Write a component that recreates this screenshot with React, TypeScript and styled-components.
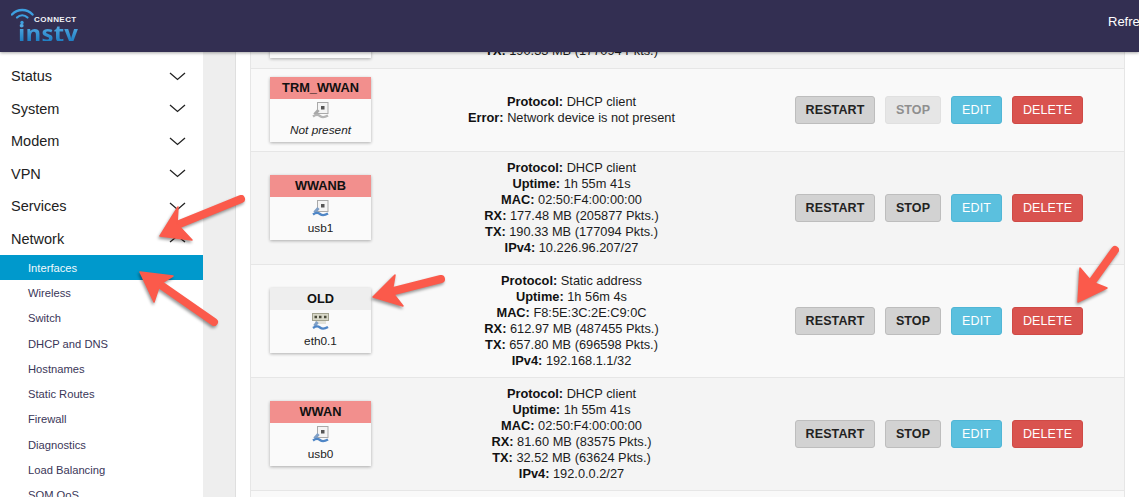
import styled, { createGlobalStyle } from "styled-components";

const GlobalStyle = createGlobalStyle`
  html, body {
    margin: 0;
    padding: 0;
    background: #fff;
  }
  * {
    box-sizing: border-box;
  }
`;

const Page = styled.div`
  position: relative;
  width: 1139px;
  height: 497px;
  overflow: hidden;
  display: flex;
  flex-direction: column;
  font-family: "Liberation Sans", Arial, sans-serif;
  color: #111;
`;

const Header = styled.header`
  position: relative;
  z-index: 2;
  flex: 0 0 52px;
  display: grid;
  grid-template-columns: 1108px 200px;
  align-items: center;
  background: #332f52;
  box-shadow: 0 1px 3px rgba(0, 0, 0, 0.35);
`;

const Logo = styled.div`
  display: flex;
  flex-direction: column;
  padding: 8px 0 0 11px;
  height: 52px;
`;

const LogoTop = styled.div`
  display: flex;
  align-items: flex-end;
  height: 16px;
`;

const LogoConnect = styled.span`
  margin: 0 0 0 -1px;
  font-size: 8px;
  line-height: 8px;
  font-weight: 700;
  letter-spacing: 0.45px;
  color: #f2f4f8;
`;

const LogoName = styled.span`
  display: block;
  width: 62px;
  height: 19px;
  margin: -2px 0 0 7px;
  overflow: hidden;
  font-family: "Open Sans", "Liberation Sans", sans-serif;
  font-size: 24px;
  line-height: 21px;
  font-weight: 700;
  letter-spacing: 0.2px;
  background: linear-gradient(#5fb4ea, #1f7fc4);
  -webkit-background-clip: text;
  background-clip: text;
  color: transparent;
`;

const RefreshLabel = styled.span`
  margin-top: -10px;
  font-size: 13px;
  color: #fff;
  white-space: nowrap;
`;

const Body = styled.div`
  flex: 1;
  display: flex;
  min-height: 0;
`;

const Sidebar = styled.nav`
  flex: 0 0 203px;
  padding-top: 8px;
  background: #fff;
`;

const MenuItem = styled.div`
  height: 32.5px;
  display: flex;
  align-items: center;
  justify-content: space-between;
  padding: 0 17px 0 11px;
  font-size: 14.5px;
  color: #222;
`;

const SubItem = styled.div<{ $active?: boolean }>`
  height: 25.3px;
  display: flex;
  align-items: center;
  padding-left: 28px;
  font-size: 11.2px;
  white-space: nowrap;
  color: ${(p) => (p.$active ? "#f2fafd" : "#3a3658")};
  background: ${(p) => (p.$active ? "#0099cc" : "transparent")};
`;

const Gutter = styled.div`
  flex: 0 0 33px;
  background: #eeeeee;
  border-right: 1px solid #dfdfdf;
`;

const Main = styled.main`
  flex: 1;
  background: #fff;
  padding: 0 14px;
  min-width: 0;
`;

const Table = styled.div`
  margin-top: -96px;
  border-left: 1px solid #e6e6e6;
  border-right: 1px solid #e6e6e6;
`;

const Row = styled.div<{ $alt?: boolean; $clipped?: boolean }>`
  min-height: ${(p) => (p.$clipped ? "113px" : "83px")};
  display: grid;
  grid-template-columns: 101px 1fr 330px;
  align-items: ${(p) => (p.$clipped ? "end" : "center")};
  padding: ${(p) => (p.$clipped ? "8px 0 9px 19px" : "8px 0 8px 19px")};
  background: ${(p) => (p.$alt ? "#f4f4f4" : "#f9f9f9")};
  border-bottom: 1px solid #e6e6e6;
`;

const Badge = styled.div`
  height: 65px;
  margin: -1px 0 1px;
  display: flex;
  flex-direction: column;
  align-items: center;
  background: #fafafa;
  box-shadow: 0 1px 3px rgba(0, 0, 0, 0.3);
`;

const BadgeTitle = styled.div<{ $down?: boolean }>`
  width: 100%;
  flex: 0 0 22px;
  display: flex;
  align-items: center;
  justify-content: center;
  font-size: 12.8px;
  font-weight: 700;
  color: #111;
  background: ${(p) => (p.$down ? "#f28f8d" : "#eeeeee")};
`;

const DeviceIcon = styled.svg`
  margin-top: 3px;
  width: 17px;
  height: 17px;
`;

const BadgeDevice = styled.div<{ $missing?: boolean }>`
  margin-top: 4px;
  font-size: 11.8px;
  line-height: 15px;
  font-style: ${(p) => (p.$missing ? "italic" : "normal")};
  color: #222;
`;

const Info = styled.div`
  padding-right: 22px;
  text-align: center;
  font-size: 12.8px;
  line-height: 16px;
  color: #1c1c1c;
  strong {
    color: #111;
  }
`;

const Actions = styled.div`
  align-self: center;
  display: flex;
  align-items: center;
  gap: 10px;
  padding-left: 1px;
`;

const ActionButton = styled.button<{ $kind: "plain" | "info" | "danger"; $off?: boolean }>`
  height: 28px;
  padding: 0;
  border-radius: 3px;
  font-family: inherit;
  font-size: 12.5px;
  font-weight: ${(p) => (p.$kind === "plain" ? 700 : 400)};
  letter-spacing: 0.1px;
  color: ${(p) => (p.$kind !== "plain" ? "#fff" : p.$off ? "#8f8f8f" : "#222")};
  background: ${(p) =>
    p.$kind === "info"
      ? "#5bc0de"
      : p.$kind === "danger"
        ? "#d9534f"
        : p.$off
          ? "#e6e6e6"
          : "#d2d2d2"};
  border: 1px solid
    ${(p) =>
      p.$kind === "info"
        ? "#50b6d6"
        : p.$kind === "danger"
          ? "#cf4a46"
          : p.$off
            ? "#e0e0e0"
            : "#bdbdbd"};
`;

const RestartButton = styled(ActionButton)`
  width: 80px;
`;
const StopButton = styled(ActionButton)`
  width: 56px;
`;
const EditButton = styled(ActionButton)`
  width: 51px;
`;
const DeleteButton = styled(ActionButton)`
  width: 71px;
`;

const ArrowLayer = styled.svg`
  position: absolute;
  inset: 0;
  z-index: 3;
  width: 1139px;
  height: 497px;
  pointer-events: none;
  filter: drop-shadow(-1px 2px 1.5px rgba(0, 0, 0, 0.4));
`;

const Chevron = ({ up }: { up?: boolean }) => (
  <svg width="17" height="9" viewBox="0 0 17 9" fill="none">
    <path
      d={up ? "M1 8 L8.5 2 L16 8" : "M1 1 L8.5 7.5 L16 1"}
      stroke="#222"
      strokeWidth="1.3"
    />
  </svg>
);

const UsbIcon = ({ muted }: { muted?: boolean }) => (
  <DeviceIcon viewBox="0 0 17 17">
    <rect x="5.5" y="0.5" width="10.5" height="11" fill="#f4f4f4" stroke="#a9a9a9" />
    <rect x="9" y="4" width="3.5" height="3.5" fill="#555" />
    <path d="M6.5 8 L2.5 12.5" stroke={muted ? "#a8a8a8" : "#7f9fc6"} strokeWidth="3" />
    <path
      d="M1 14.5 Q5 11.5 8 14 T16 13.5"
      fill="none"
      stroke={muted ? "#b5b5b5" : "#4f86c6"}
      strokeWidth="2.4"
    />
  </DeviceIcon>
);

const EthernetIcon = () => (
  <DeviceIcon viewBox="0 0 17 17">
    <rect x="0.5" y="0.5" width="16" height="7" fill="#d8d8c8" stroke="#a3a38f" />
    <path d="M2.5 4 h2.5 M7 4 h2.5 M12 4 h2.5" stroke="#4a4a3a" strokeWidth="2.4" />
    <rect x="3" y="8" width="11" height="3" fill="#e3e3da" />
    <path d="M5.5 9 L2.5 13" stroke="#7f9fc6" strokeWidth="3" />
    <path d="M1 15 Q5 12 8 14.5 T16 14" fill="none" stroke="#4f86c6" strokeWidth="2.4" />
  </DeviceIcon>
);

type Line = [string, string];

type Iface = {
  name: string;
  device: string;
  down?: boolean;
  missing?: boolean;
  eth?: boolean;
  lines: Line[];
};

const interfaces: Iface[] = [
  {
    name: "TRM_WWAN",
    device: "Not present",
    down: true,
    missing: true,
    lines: [
      ["Protocol:", "DHCP client"],
      ["Error:", "Network device is not present"],
    ],
  },
  {
    name: "WWANB",
    device: "usb1",
    down: true,
    lines: [
      ["Protocol:", "DHCP client"],
      ["Uptime:", "1h 55m 41s"],
      ["MAC:", "02:50:F4:00:00:00"],
      ["RX:", "177.48 MB (205877 Pkts.)"],
      ["TX:", "190.33 MB (177094 Pkts.)"],
      ["IPv4:", "10.226.96.207/27"],
    ],
  },
  {
    name: "OLD",
    device: "eth0.1",
    eth: true,
    lines: [
      ["Protocol:", "Static address"],
      ["Uptime:", "1h 56m 4s"],
      ["MAC:", "F8:5E:3C:2E:C9:0C"],
      ["RX:", "612.97 MB (487455 Pkts.)"],
      ["TX:", "657.80 MB (696598 Pkts.)"],
      ["IPv4:", "192.168.1.1/32"],
    ],
  },
  {
    name: "WWAN",
    device: "usb0",
    down: true,
    lines: [
      ["Protocol:", "DHCP client"],
      ["Uptime:", "1h 55m 41s"],
      ["MAC:", "02:50:F4:00:00:00"],
      ["RX:", "81.60 MB (83575 Pkts.)"],
      ["TX:", "32.52 MB (63624 Pkts.)"],
      ["IPv4:", "192.0.0.2/27"],
    ],
  },
];

const menu = ["Status", "System", "Modem", "VPN", "Services"];
const subMenu = [
  "Interfaces",
  "Wireless",
  "Switch",
  "DHCP and DNS",
  "Hostnames",
  "Static Routes",
  "Firewall",
  "Diagnostics",
  "Load Balancing",
  "SQM QoS",
];

const InfoLines = ({ lines }: { lines: Line[] }) => (
  <Info>
    {lines.map(([label, value]) => (
      <div key={label}>
        <strong>{label}</strong> {value}
      </div>
    ))}
  </Info>
);

const RowActions = ({ stopped }: { stopped?: boolean }) => (
  <Actions>
    <RestartButton $kind="plain">RESTART</RestartButton>
    <StopButton $kind="plain" $off={stopped}>
      STOP
    </StopButton>
    <EditButton $kind="info">EDIT</EditButton>
    <DeleteButton $kind="danger">DELETE</DeleteButton>
  </Actions>
);

export default function App() {
  return (
    <Page>
      <GlobalStyle />
      <Header>
        <Logo>
          <LogoTop>
            <svg width="24" height="16" viewBox="0 0 24 16" fill="none">
              <path d="M1 6.5 C6.5 0.5 16 0.5 21.5 6.5" stroke="#3d9fe0" strokeWidth="2.4" strokeLinecap="round" />
              <path d="M6 9.5 C9 6.5 13.5 6.5 16.5 9.5" stroke="#3d9fe0" strokeWidth="2.2" strokeLinecap="round" />
              <circle cx="11" cy="14.5" r="1.7" fill="#3d9fe0" />
            </svg>
            <LogoConnect>CONNECT</LogoConnect>
          </LogoTop>
          <LogoName>insty</LogoName>
        </Logo>
        <RefreshLabel>Refreshing...</RefreshLabel>
      </Header>
      <Body>
        <Sidebar>
          {menu.map((item) => (
            <MenuItem key={item}>
              {item}
              <Chevron />
            </MenuItem>
          ))}
          <MenuItem>
            Network
            <Chevron up />
          </MenuItem>
          {subMenu.map((item, i) => (
            <SubItem key={item} $active={i === 0}>
              {item}
            </SubItem>
          ))}
        </Sidebar>
        <Gutter />
        <Main>
          <Table>
            <Row $alt $clipped>
              <Badge>
                <BadgeTitle $down>WWANC</BadgeTitle>
                <UsbIcon />
                <BadgeDevice>usb2</BadgeDevice>
              </Badge>
              <InfoLines
                lines={[
                  ["Protocol:", "DHCP client"],
                  ["Uptime:", "1h 55m 41s"],
                  ["MAC:", "02:50:F4:00:00:00"],
                  ["RX:", "177.48 MB (205877 Pkts.)"],
                  ["TX:", "190.33 MB (177094 Pkts.)"],
                ]}
              />
              <RowActions />
            </Row>
            {interfaces.map((item, i) => (
              <Row key={item.name} $alt={i % 2 === 1}>
                <Badge>
                  <BadgeTitle $down={item.down}>{item.name}</BadgeTitle>
                  {item.eth ? <EthernetIcon /> : <UsbIcon muted={item.missing} />}
                  <BadgeDevice $missing={item.missing}>{item.device}</BadgeDevice>
                </Badge>
                <InfoLines lines={item.lines} />
                <RowActions stopped={item.missing} />
              </Row>
            ))}
            <Row />
          </Table>
        </Main>
      </Body>
      <ArrowLayer viewBox="0 0 1139 497">
        <g fill="#fb5a4b" stroke="#fb5a4b" strokeLinejoin="round">
          <path d="M241 199 L172 227" strokeWidth="8" strokeLinecap="round" />
          <path d="M160 236 L178 207 L177 224 L192 240 Z" strokeWidth="1.5" />
          <path d="M214 322 L155 281" strokeWidth="8" strokeLinecap="round" />
          <path d="M140 272 L173 276 L160 284 L154 302 Z" strokeWidth="1.5" />
          <path d="M441 279 L386 293" strokeWidth="8" strokeLinecap="round" />
          <path d="M373 297 L395 275 L392 292 L403 306 Z" strokeWidth="1.5" />
          <path d="M1115 250 L1087 289" strokeWidth="8" strokeLinecap="round" />
          <path d="M1078 302 L1080 268 L1092 282 L1107 288 Z" strokeWidth="1.5" />
        </g>
      </ArrowLayer>
    </Page>
  );
}
